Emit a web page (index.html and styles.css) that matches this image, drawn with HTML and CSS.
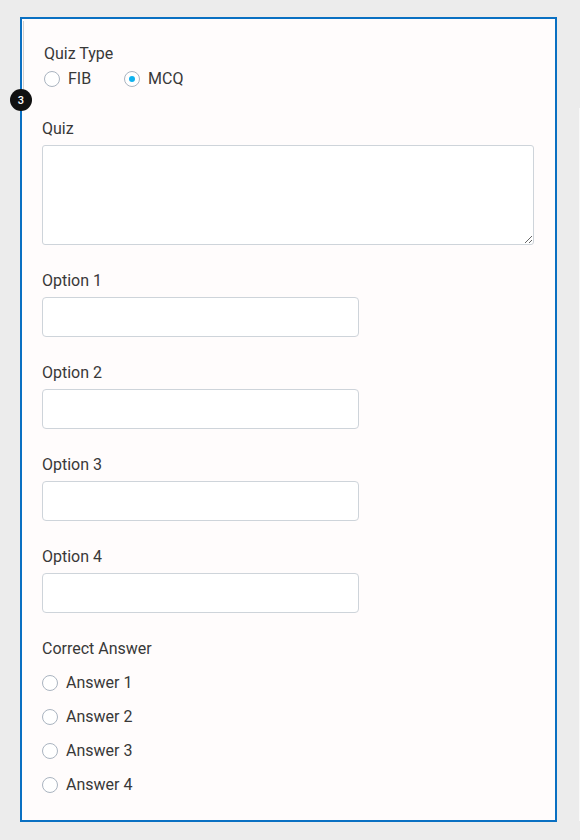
FILE: index.html
```html
<!DOCTYPE html>
<html>
<head>
<meta charset="utf-8">
<link rel="stylesheet" href="styles.css">
</head>
<body>
<div class="card">
  <span class="badge">3</span>
  <div class="type-section">
    <div class="label">Quiz Type</div>
    <div class="type-row">
      <label class="radio-item"><span class="radio"></span>FIB</label>
      <label class="radio-item"><span class="radio checked"></span>MCQ</label>
    </div>
  </div>
  <div class="field first">
    <div class="label">Quiz</div>
    <textarea class="textarea"></textarea>
  </div>
  <div class="field">
    <div class="label">Option 1</div>
    <input class="input" type="text">
  </div>
  <div class="field">
    <div class="label">Option 2</div>
    <input class="input" type="text">
  </div>
  <div class="field">
    <div class="label">Option 3</div>
    <input class="input" type="text">
  </div>
  <div class="field">
    <div class="label">Option 4</div>
    <input class="input" type="text">
  </div>
  <div class="field">
    <div class="label">Correct Answer</div>
    <div class="answers">
      <label class="radio-item"><span class="radio"></span>Answer 1</label>
      <label class="radio-item"><span class="radio"></span>Answer 2</label>
      <label class="radio-item"><span class="radio"></span>Answer 3</label>
      <label class="radio-item"><span class="radio"></span>Answer 4</label>
    </div>
  </div>
</div>
<div class="peek"></div>
</body>
</html>
```
FILE: styles.css
```css
html, body {
  margin: 0;
  overflow: hidden;
}
body {
  background: #ececec;
  width: 580px;
  height: 840px;
  display: flex;
  align-items: flex-start;
  padding: 17px 0 0 20px;
  box-sizing: border-box;
  font-family: Roboto, "Liberation Sans", sans-serif;
  font-size: 16px;
  color: #383838;
}
.card {
  position: relative;
  flex: none;
  width: 537px;
  height: 805px;
  box-sizing: border-box;
  border: 2px solid #0a70c2;
  background: #fffcfc;
}
.peek {
  flex: none;
  width: 1px;
  height: 713px;
  margin-left: 22px;
  margin-top: 91px;
  background: #f9f9f9;
}
.badge {
  position: absolute;
  left: -12px;
  top: 70px;
  width: 22px;
  height: 22px;
  border-radius: 50%;
  background: #111;
  color: #fff;
  font-size: 11px;
  font-weight: 500;
  display: flex;
  align-items: center;
  justify-content: center;
}
.type-section {
  margin: 2px 0 0 1px;
  border-left: 1px solid #cfcfcf;
  padding: 21px 0 5px 20px;
}
.label {
  line-height: 24px;
  height: 22px;
}
.type-row {
  display: flex;
  margin-top: 4px;
  height: 22px;
}
.type-row .radio-item {
  width: 80px;
}
.radio-item {
  display: flex;
  align-items: center;
  gap: 8px;
  height: 22px;
  line-height: 22px;
}
.radio {
  width: 16px;
  height: 16px;
  box-sizing: border-box;
  border: 1px solid #aab4c0;
  border-radius: 50%;
  background: #fff;
  display: flex;
  align-items: center;
  justify-content: center;
  flex: none;
}
.radio.checked::after {
  content: "";
  width: 6px;
  height: 6px;
  border-radius: 50%;
  background: #10b2ee;
}
.field {
  padding: 0 22px 0 20px;
  margin-top: 24px;
  display: flex;
  flex-direction: column;
  align-items: flex-start;
}
.field.first {
  margin-top: 22px;
}
.textarea {
  margin-top: 6px;
  width: 492px;
  height: 100px;
  box-sizing: border-box;
  border: 1px solid #ced4da;
  border-radius: 3px;
  background: #fff;
  font-family: inherit;
  font-size: 15px;
  display: block;
}
.input {
  margin-top: 6px;
  width: 317px;
  height: 40px;
  box-sizing: border-box;
  border: 1px solid #ced4da;
  border-radius: 4px;
  background: #fff;
  font-family: inherit;
  font-size: 15px;
  display: block;
}
.answers {
  margin-top: 13px;
  display: flex;
  flex-direction: column;
  gap: 12px;
}
```
